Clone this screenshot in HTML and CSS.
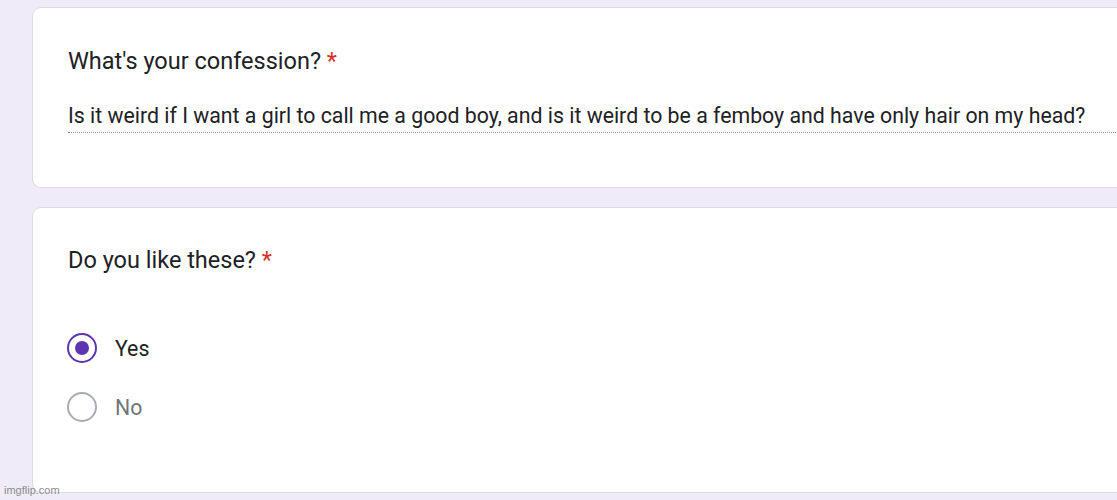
FILE: index.html
```html
<!DOCTYPE html>
<html>
<head>
<meta charset="utf-8">
<link rel="stylesheet" href="styles.css">
</head>
<body>
<div class="page">
  <div class="card card-1">
    <div class="title">What's your confession? <span class="req">*</span></div>
    <div class="answer">Is it weird if I want a girl to call me a good boy, and is it weird to be a femboy and have only hair on my head?</div>
  </div>
  <div class="card card-2">
    <div class="title">Do you like these? <span class="req">*</span></div>
    <div class="options">
      <div class="option">
        <span class="radio checked"><span class="dot"></span></span>
        <span class="label">Yes</span>
      </div>
      <div class="option">
        <span class="radio"></span>
        <span class="label muted">No</span>
      </div>
    </div>
  </div>
</div>
<div class="watermark">imgflip.com</div>
</body>
</html>
```
FILE: styles.css
```css
html, body {
  margin: 0;
  padding: 0;
  background: #f0ebf8;
  width: 1117px;
  height: 500px;
  overflow: hidden;
  font-family: Roboto, "Liberation Sans", sans-serif;
  color: #202124;
}
.page {
  padding: 7px 0 0 32px;
  display: flex;
  flex-direction: column;
  gap: 19px;
}
.card {
  background: #fff;
  border: 1px solid #dadce0;
  border-right: none;
  border-radius: 9px 0 0 9px;
  padding: 0 0 0 35px;
  box-sizing: border-box;
  width: 1100px;
}
.card-1 {
  height: 181px;
  padding-top: 37px;
}
.card-2 {
  height: 286px;
  padding-top: 36px;
}
.title {
  font-size: 23.5px;
  line-height: 32px;
}
.req {
  color: #d93025;
}
.answer {
  margin-top: 25px;
  font-size: 21.3px;
  line-height: 27px;
  padding-bottom: 3px;
  border-bottom: 1px dotted #8a8a8a;
  white-space: nowrap;
}
.options {
  margin-top: 57px;
  display: flex;
  flex-direction: column;
  gap: 29px;
}
.option {
  display: flex;
  align-items: center;
  height: 30px;
}
.radio {
  width: 30px;
  height: 30px;
  box-sizing: border-box;
  border-radius: 50%;
  border: 2.8px solid #a9acb0;
  display: flex;
  align-items: center;
  justify-content: center;
  margin-left: -1px;
}
.radio.checked {
  border-color: #5e35b1;
}
.dot {
  width: 14px;
  height: 14px;
  border-radius: 50%;
  background: #5e35b1;
}
.label {
  margin-left: 18px;
  font-size: 21.3px;
}
.label.muted {
  color: #70757a;
}
.watermark {
  position: absolute;
  left: 4px;
  top: 484px;
  font-size: 11px;
  color: #8c8c8c;
  font-family: "Liberation Sans", Arial, sans-serif;
}
```
